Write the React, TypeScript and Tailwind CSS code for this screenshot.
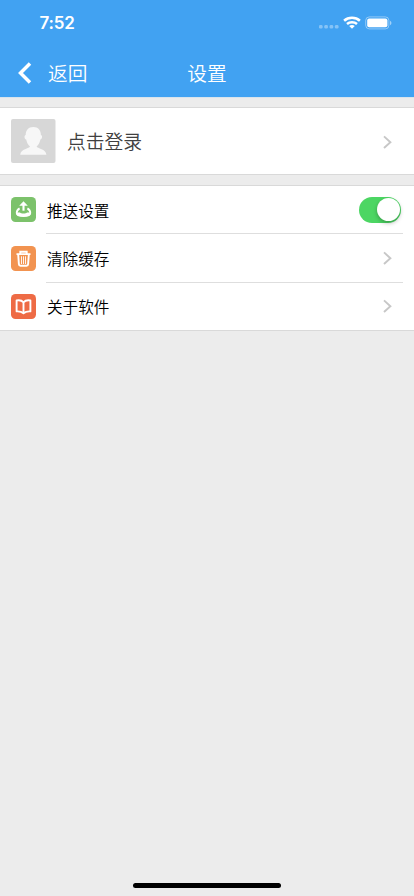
import type { ReactNode } from "react";

const cjk = "font-['Noto_Sans_CJK_SC',sans-serif]";

function StatusBar() {
  return (
    <div className="flex h-[49px] items-center pr-[21px] pb-[3px] pl-[39.5px] text-white">
      <span className="font-['Inter','Liberation_Sans',sans-serif] text-[17px] leading-none font-semibold tracking-[-0.2px]">7:52</span>
      <div className="ml-auto flex items-center">
        <svg width="20" height="5" viewBox="0 0 20 5" className="mt-[7px] mr-[4px]" fill="#fff" fillOpacity=".36">
          <rect x="0" y="1" width="3.6" height="3.4" rx="1.2" />
          <rect x="5.3" y="1" width="3.6" height="3.4" rx="1.2" />
          <rect x="10.6" y="1" width="3.6" height="3.4" rx="1.2" />
          <rect x="15.9" y="1" width="3.6" height="3.4" rx="1.2" />
        </svg>
        <svg width="18" height="13" viewBox="0 0 18 13" className="mr-[4px] mb-px" fill="none" stroke="#fff" strokeWidth="2.6">
          <path d="M1.1 4.7C5.5.8 12.5.8 16.9 4.7" />
          <path d="M4 7.9c2.8-2.3 7.2-2.3 10 0" />
          <path d="M9 12.7 6.2 9.900c1.600-1.300 4-1.300 5.600 0z" fill="#fff" stroke="none" />
        </svg>
        <svg width="28" height="14" viewBox="0 0 28 14" className="mb-px">
          <rect x=".7" y=".9" width="23.2" height="12" rx="3.6" fill="none" stroke="#fff" strokeOpacity=".42" />
          <rect x="2.2" y="2.5" width="20.2" height="8.8" rx="2" fill="#fff" />
          <path d="M25 4.8c2 .8 2 3.6 0 4.400z" fill="#fff" fillOpacity=".5" />
        </svg>
      </div>
    </div>
  );
}

function Chevron() {
  return (
    <svg width="9" height="14" viewBox="0 0 9 14" fill="none" stroke="#c7c7c7" strokeWidth="1.9" className="mr-[22px] ml-auto shrink-0">
      <path d="M1 1.4 7.4 7.2 1 13" />
    </svg>
  );
}

function Tile({ color, children }: { color: string; children: ReactNode }) {
  return (
    <div className={`mb-px ml-[11px] size-[25px] shrink-0 rounded-[4.5px] ${color}`}>
      <svg width="25" height="25" viewBox="0 0 25 25" fill="none" stroke="#fff">
        {children}
      </svg>
    </div>
  );
}

function Row({ icon, label, end, last }: { icon: ReactNode; label: string; end: ReactNode; last?: boolean }) {
  return (
    <div className="flex h-full items-center">
      {icon}
      <div className={`mr-[11px] ml-[10px] flex h-full flex-1 items-center border-b pl-px ${last ? "border-transparent" : "border-[#dedede]"}`}>
        <span className="text-[15.6px] leading-6 font-[350] text-black">{label}</span>
        {end}
      </div>
    </div>
  );
}

export default function App() {
  return (
    <div className={`flex h-[896px] w-[414px] flex-col overflow-hidden bg-[#ececec] ${cjk}`}>
      <header className="h-[98px] shrink-0 border-b border-[#d8e4ed] bg-[#41a2f2]">
        <StatusBar />
        <div className="grid h-[47px] grid-cols-[1fr_auto_1fr] items-center text-[19.7px] leading-7 font-[350] text-white">
          <div className="flex items-center">
            <svg width="14" height="22" viewBox="0 0 14 22" fill="none" stroke="#fff" strokeWidth="3.5" className="mt-px mr-[16.5px] ml-[17.5px]">
              <path d="M12 1.4 2.5 11 12 20.6" />
            </svg>
            返回
          </div>
          <h1 className="font-[350]">设置</h1>
        </div>
      </header>

      <section className="mt-[9px] flex h-[68px] shrink-0 items-center border-y border-[#d9d9d9] bg-white">
        <svg width="45" height="44" viewBox="0 0 45 44" className="ml-[11px]">
          <rect width="44.5" height="44" rx="2" fill="#d7d7d7" />
          <path d="M22.3 8c-5 0-7.6 3.3-7.6 8-1.8.3-1.4 4 .5 4.5.7 3.5 2 5.600 3.800 7-.6 2.200-9.400 2.100-9.800 8.300h26.200c-.4-6.200-9.200-6.100-9.800-8.300 1.800-1.400 3.100-3.500 3.800-7 1.900-.5 2.300-4.200.5-4.500 0-4.700-2.600-8-7.600-8z" fill="#f7f7f7" />
        </svg>
        <span className="ml-[11px] text-[18.8px] leading-7 font-[350] text-[#404040]">点击登录</span>
        <span className="mt-[2px] ml-auto"><Chevron /></span>
      </section>

      <section className="mt-[10px] grid h-[146px] shrink-0 grid-rows-[48px_49px_47px] border-y border-[#d9d9d9] bg-white">
        <Row
          icon={
            <Tile color="bg-[#7cc26b]">
              <path d="M12.5 13.7V7" strokeWidth="2.1" />
              <path d="m12.5 4.200-4.300 4.500h8.600z" fill="#fff" stroke="none" />
              <path d="M8.600 11.400C7.200 12.200 5.700 14.600 5.700 16c0 2.200 2.300 3 6.800 3s6.800-.8 6.800-3c0-1.400-1.500-3.800-2.900-4.600" strokeWidth="1.800" />
              <path d="M5.800 15.600h3.200c.8 1.300 6.200 1.300 7 0h3.200v2.100c-1 2-12.400 2-13.400 0z" fill="#fff" stroke="none" />
            </Tile>
          }
          label="推送设置"
          end={
            <div className="mr-[2px] ml-auto flex h-[26px] w-[42px] items-center justify-end rounded-full bg-[#4cd663] pr-px">
              <div className="size-[23.5px] rounded-full bg-white shadow-[0_2px_4px_rgba(0,0,0,0.28)]" />
            </div>
          }
        />
        <Row
          icon={
            <Tile color="bg-[#f29350]">
              <path d="M5.500 8.100h14M9.300 7.800V5.700h6.400v2.100" strokeWidth="1.900" />
              <path d="m7.200 8.500.7 9.600q.1 1.600 1.500 1.600h6.200q1.400 0 1.500-1.600l.7-9.600" strokeWidth="1.900" />
              <path d="M10.500 10.300v7.700M12.500 10.300v7.700M14.500 10.300v7.700" strokeWidth=".9" />
            </Tile>
          }
          label="清除缓存"
          end={<span className="-mr-[11px] ml-auto"><Chevron /></span>}
        />
        <Row
          last
          icon={
            <Tile color="bg-[#ee6b45]">
              <path d="M5.600 6.500c2.600-.5 5.300 0 6.900 1.900 1.600-1.900 4.300-2.400 6.900-1.900v10.900c-2.600-.2-4.800.1-6.900 1.800-2.100-1.700-4.300-2-6.900-1.800zM12.500 8.400v10.400" strokeWidth="1.900" strokeLinejoin="round" />
            </Tile>
          }
          label="关于软件"
          end={<span className="-mr-[11px] ml-auto"><Chevron /></span>}
        />
      </section>

      <div className="mx-auto mt-auto mb-[8px] h-[5px] w-[148px] shrink-0 rounded-full bg-black" />
    </div>
  );
}
